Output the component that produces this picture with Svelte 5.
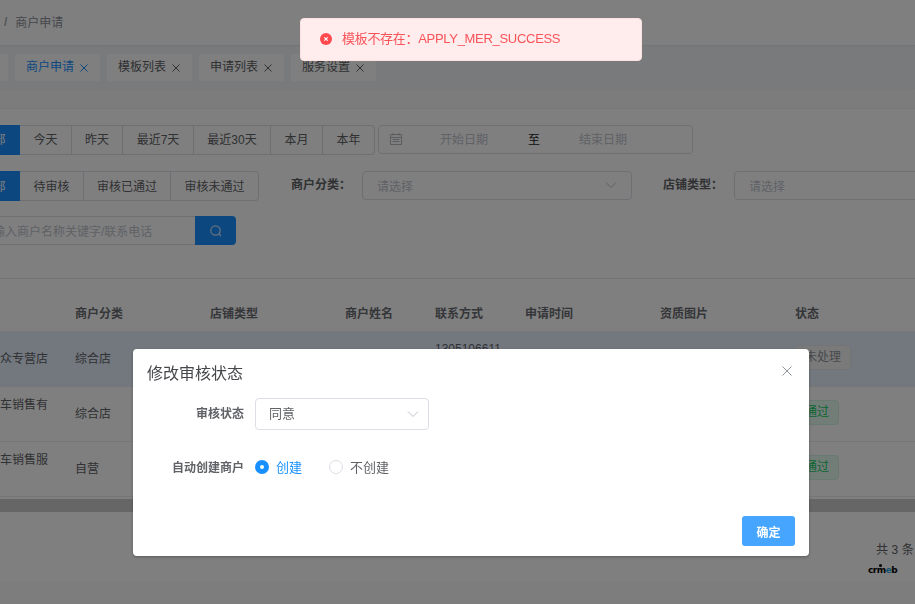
<script>
  const todayBtns = ['全部', '今天', '昨天', '最近7天', '最近30天', '本月', '本年'];
  const statusBtns = ['全部', '待审核', '审核已通过', '审核未通过'];
  const tags = [
    { name: '首页' },
    { name: '商户申请', active: true, close: true },
    { name: '模板列表', close: true },
    { name: '申请列表', close: true },
    { name: '服务设置', close: true }
  ];
  const heads = ['', '商户分类', '店铺类型', '商户姓名', '联系方式', '申请时间', '资质图片', '状态'];
  const rows = [
    { shop: '上海大众专营店', cate: '综合店', phone: '13051066111', status: '未处理', cls: 'gray', hl: true },
    { shop: '宝马汽车销售有限公司', cate: '综合店', phone: '', status: '通过', cls: 'green' },
    { shop: '奔驰汽车销售服务', cate: '自营', phone: '', status: '通过', cls: 'green' }
  ];
</script>

<div class="page">
  <header class="topbar"><span class="sep">/</span><span class="crumb">商户申请</span></header>

  <div class="tagbar">
    {#each tags as t}
      <div class="tag" class:active={t.active}>
        <span class="tagname">{t.name}</span>
        {#if t.close}
          <svg class="x" viewBox="0 0 10 10"><path d="M1.5 1.5l7 7M8.5 1.5l-7 7" /></svg>
        {/if}
      </div>
    {/each}
  </div>
  <div class="strip"></div>

  <main class="card">
    <section class="filters">
      <div class="line one">
        <div class="seg date-seg">
          {#each todayBtns as b, i}<span class="btn" class:on={i === 0}>{b}</span>{/each}
        </div>
        <div class="datepick">
          <svg class="cal" viewBox="0 0 14 14"><path d="M1.5 2.5h11v10h-11zM1.5 5.5h11M4 1v2.5M10 1v2.5M3.5 7.5h7M3.5 9.5h7" /></svg>
          <span class="ph start">开始日期</span>
          <span class="to">至</span>
          <span class="ph end">结束日期</span>
        </div>
      </div>

      <div class="line two">
        <div class="seg status-seg">
          {#each statusBtns as b, i}<span class="btn" class:on={i === 0}>{b}</span>{/each}
        </div>
        <span class="flabel first">商户分类：</span>
        <div class="fselect cate">
          <span class="ph">请选择</span>
          <svg class="arrow" viewBox="0 0 12 8"><path d="M1 1.5l5 5 5-5" /></svg>
        </div>
        <span class="flabel second">店铺类型：</span>
        <div class="fselect shop"><span class="ph">请选择</span></div>
      </div>

      <div class="line three">
        <div class="search"><span class="ph">请输入商户名称关键字/联系电话</span></div>
        <span class="searchbtn">
          <svg viewBox="0 0 14 14"><circle cx="6.5" cy="6.5" r="4.7" /><path d="M10 10l2 2" /></svg>
        </span>
      </div>
    </section>

    <section class="table">
      <div class="tr thead">
        {#each heads as h}<div class="th">{h}</div>{/each}
      </div>
      {#each rows as r}
        <div class="tr" class:hl={r.hl}>
          <div class="td shopname">{r.shop}</div>
          <div class="td">{r.cate}</div>
          <div class="td"></div>
          <div class="td"></div>
          <div class="td phone">{r.phone}</div>
          <div class="td"></div>
          <div class="td"></div>
          <div class="td"><span class="st {r.cls}">{r.status}</span></div>
        </div>
      {/each}
      <div class="scrollbar"></div>
    </section>

    <div class="pager">共 3 条</div>
    <div class="logo">cr<span class="m">m</span><span class="e">e</span>b</div>
  </main>
</div>

<div class="overlay"></div>

<div class="dialog">
  <div class="dlg-head">
    <span class="dlg-title">修改审核状态</span>
    <svg class="dlg-close" viewBox="0 0 10 10"><path d="M.5.5l9 9M9.5.5l-9 9" /></svg>
  </div>
  <div class="form">
    <div class="frow">
      <span class="lab">审核状态</span>
      <div class="dselect">
        <span class="val">同意</span>
        <svg viewBox="0 0 12 8"><path d="M1 1.5l5 5 5-5" /></svg>
      </div>
    </div>
    <div class="frow radios">
      <span class="lab">自动创建商户</span>
      <span class="radio checked"><i></i><b>创建</b></span>
      <span class="radio"><i></i><b>不创建</b></span>
    </div>
  </div>
  <div class="dlg-foot"><span class="ok">确定</span></div>
</div>

<div class="toast">
  <svg viewBox="0 0 12 12"><circle cx="6" cy="6" r="6" fill="#ff4a50" /><path d="M4.3 4.3l3.4 3.4M7.7 4.3l-3.4 3.4" stroke="#fff" stroke-width="1.2" /></svg>
  <span class="msg">模板不存在：APPLY_MER_SUCCESS</span>
</div>

<style>
  :global(body) {
    margin: 0;
    font-family: "Liberation Sans", "Noto Sans CJK SC", sans-serif;
    font-size: 12px;
    color: #606266;
  }

  .page {
    width: 915px;
    height: 604px;
    overflow: hidden;
    background: #fafbfd;
    display: flex;
    flex-direction: column;
  }

  .topbar {
    height: 45px;
    flex: none;
    background: #fff;
    display: flex;
    align-items: center;
    padding: 0 0 2px 4px;
    box-sizing: border-box;
    color: #8c9097;
  }
  .sep { margin-right: 8px; font-weight: 700; color: #a8abb2; }

  .tagbar {
    height: 45px;
    flex: none;
    box-sizing: border-box;
    padding: 9px 0;
    margin-left: -38px;
    background: #f1f4f7;
    display: flex;
    gap: 7px;
    box-shadow: inset 0 1px 1px rgba(0, 0, 0, 0.05);
  }
  .tag {
    height: 27px;
    flex: none;
    background: #fff;
    padding: 0 11px;
    display: flex;
    align-items: center;
    gap: 5px;
    color: #606266;
  }
  .tagname { margin-top: -4px; }
  .tag.active { color: #1890ff; }
  .x { width: 10px; height: 10px; fill: none; stroke: currentColor; stroke-width: 1; }

  .strip { height: 18px; flex: none; background: #f8f9fb; }

  .card {
    height: 475px;
    flex: none;
    background: #fff;
    border-top: 1px solid #eef0f3;
    box-sizing: border-box;
    position: relative;
  }

  .filters {
    height: 170px;
    box-sizing: border-box;
    padding-top: 16px;
    border-bottom: 1px solid #e6e8eb;
    display: flex;
    flex-direction: column;
  }
  .line { display: flex; align-items: flex-start; }
  .one { height: 46px; }
  .two { height: 45px; }

  .seg { display: flex; height: 30px; margin-left: -36px; }
  .btn {
    border: 1px solid #dcdfe6;
    border-left: 0;
    box-sizing: border-box;
    display: flex;
    align-items: center;
    justify-content: center;
    height: 30px;
    width: 52px;
    padding-bottom: 2px;
  }
  .date-seg .btn { padding-bottom: 4px; }
  .btn:last-child { border-radius: 0 4px 4px 0; }
  .btn.on { background: #1890ff; border-color: #1890ff; color: #fff; width: 56px; padding-left: 4px; }
  .date-seg .btn:nth-child(3) { width: 51px; }
  .date-seg .btn:nth-child(4) { width: 71px; }
  .date-seg .btn:nth-child(5) { width: 77px; }
  .status-seg .btn:nth-child(2) { width: 64px; }
  .status-seg .btn:nth-child(3) { width: 87px; }
  .status-seg .btn:nth-child(4) { width: 88px; }

  .ph { color: #c0c4cc; }
  .datepick {
    margin-left: 3px;
    width: 315px;
    height: 29px;
    border: 1px solid #dcdfe6;
    border-radius: 4px;
    box-sizing: border-box;
    display: flex;
    align-items: center;
    padding: 0 0 2px 10px;
  }
  .cal { width: 14px; height: 14px; fill: none; stroke: #b4b8c0; stroke-width: 1; flex: none; }
  .start { margin-left: 37px; }
  .to { margin-left: 40px; color: #222; }
  .end { margin-left: 39px; }

  .flabel { font-weight: 700; line-height: 29px; color: #606266; }
  .first { margin-left: 32px; width: 71px; flex: none; }
  .second { margin-left: 31px; width: 71px; flex: none; }
  .fselect {
    height: 29px;
    border: 1px solid #dcdfe6;
    border-radius: 4px;
    box-sizing: border-box;
    display: flex;
    align-items: center;
    justify-content: space-between;
    padding: 0 14px 1px;
    flex: none;
  }
  .cate { width: 270px; }
  .shop { width: 240px; }
  .arrow { width: 12px; height: 8px; fill: none; stroke: #c0c4cc; stroke-width: 1; }

  .three { margin-left: -28px; }
  .search {
    width: 223px;
    height: 29px;
    box-sizing: border-box;
    border: 1px solid #dcdfe6;
    border-right: 0;
    border-radius: 4px 0 0 4px;
    display: flex;
    align-items: center;
    padding-left: 8px;
  }
  .search .ph { white-space: nowrap; }
  .searchbtn {
    width: 41px;
    height: 29px;
    background: #1890ff;
    border-radius: 0 4px 4px 0;
    display: flex;
    align-items: center;
    justify-content: center;
  }
  .searchbtn svg { width: 14px; height: 14px; fill: none; stroke: #cfe6ff; stroke-width: 1.2; }

  .table { margin-left: -36px; width: 966px; }
  .tr {
    display: grid;
    grid-template-columns: 111px 135px 135px 90px 90px 135px 135px 135px;
    height: 55px;
    align-items: center;
    border-bottom: 1px solid #e9ecef;
    box-sizing: border-box;
  }
  .thead { height: 53px; align-items: end; padding-bottom: 10px; }
  .th { font-weight: 700; color: #6a6d72; }
  .hl { background: #e6f0ff; }
  .td { line-height: 18px; }
  .shopname { width: 84px; }
  .phone { align-self: start; padding-top: 8px; width: 66px; word-break: break-all; }
  .st {
    display: inline-block;
    height: 25px;
    line-height: 22px;
    box-sizing: border-box;
    padding: 0 9px;
    border: 1px solid;
    border-radius: 4px;
    margin-top: -3px;
    vertical-align: middle;
  }
  .gray { background: #f4f4f5; border-color: #e9e9eb; color: #909399; }
  .green { background: #e7faf0; border-color: #d0f5e0; color: #13ce66; }

  .scrollbar { height: 13px; margin-top: 2px; background: #cdcdcd; }

  .pager { margin: 28px 0 0 876px; white-space: nowrap; letter-spacing: 0.1px; }
  .logo {
    margin: 7px 0 0 868px;
    width: 30px;
    font-family: "DejaVu Sans", sans-serif;
    font-weight: 700;
    font-size: 9px;
    letter-spacing: -0.5px;
    line-height: 12px;
    color: #000;
    position: relative;
  }
  .logo .m { color: #000; position: relative; }
  .logo .m::before {
    content: "";
    position: absolute;
    left: 2.5px;
    top: -1px;
    width: 3px;
    height: 3px;
    border-radius: 50%;
    background: #000;
  }
  .logo .e { color: #2aa5e0; }

  .overlay {
    position: fixed;
    inset: 0;
    background: rgba(0, 0, 0, 0.5);
  }

  .dialog {
    position: fixed;
    left: 133px;
    top: 349px;
    width: 676px;
    height: 207px;
    background: #fff;
    border-radius: 4px;
    box-shadow: 0 1px 3px rgba(0, 0, 0, 0.3);
    display: flex;
    flex-direction: column;
  }
  .dlg-head {
    height: 49px;
    flex: none;
    box-sizing: border-box;
    padding: 13px 17px 0 14px;
    display: flex;
    justify-content: space-between;
  }
  .dlg-title { font-size: 16px; line-height: 20px; margin-top: 2px; color: #45474b; }
  .dlg-close { width: 10px; height: 10px; margin-top: 4px; fill: none; stroke: #909399; stroke-width: 1; }
  .form { flex: 1; }
  .frow { display: flex; align-items: center; height: 32px; }
  .radios { margin-top: 21px; }
  .lab { width: 111px; text-align: right; margin: -4px 11px 0 0; font-weight: 700; color: #606266; flex: none; }
  .radios .lab { margin-top: -2px; }
  .dselect {
    width: 174px;
    height: 32px;
    box-sizing: border-box;
    border: 1px solid #dcdfe6;
    border-radius: 4px;
    padding: 0 9px 0 13px;
    font-size: 13px;
    display: flex;
    align-items: center;
    justify-content: space-between;
  }
  .val { margin-top: -4px; }
  .dselect svg { width: 12px; height: 8px; fill: none; stroke: #c0c4cc; stroke-width: 1; }
  .radio { display: flex; align-items: center; font-size: 13px; color: #606266; margin-right: 27px; }
  .radio b { font-weight: 400; margin-top: -2px; }
  .radio i {
    width: 14px;
    height: 14px;
    box-sizing: border-box;
    border: 1px solid #dcdfe6;
    border-radius: 50%;
    margin: -1px 7px 0 0;
    background: #fff;
  }
  .radio.checked { color: #1890ff; }
  .radio.checked i { border: 5px solid #1890ff; }
  .dlg-foot { display: flex; justify-content: flex-end; padding: 0 14px 10px 0; }
  .ok {
    width: 53px;
    height: 30px;
    background: #46a6ff;
    color: #fff;
    border-radius: 3px;
    display: flex;
    align-items: center;
    justify-content: center;
    font-weight: 700;
  }

  .toast {
    position: fixed;
    left: 300px;
    top: 18px;
    width: 342px;
    height: 43px;
    box-sizing: border-box;
    background: #ffecec;
    border: 1px solid #fde2e2;
    border-radius: 4px;
    display: flex;
    align-items: center;
    padding: 0 0 2px 19px;
    gap: 10px;
    color: #f9535a;
    font-size: 13px;
    letter-spacing: -0.3px;
  }
  .msg { margin-top: -2px; }
  .toast svg { width: 12px; height: 12px; flex: none; }
</style>
